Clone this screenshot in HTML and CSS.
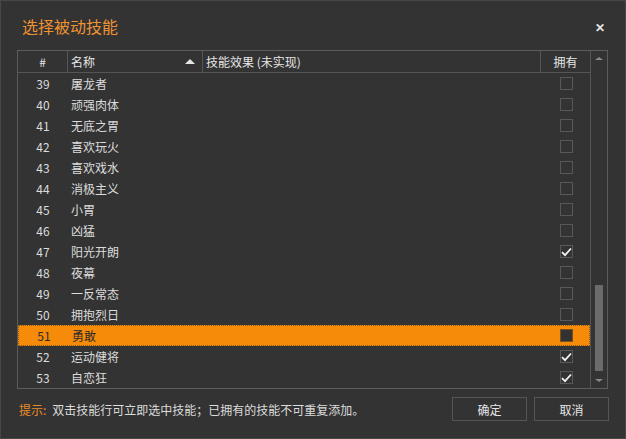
FILE: index.html
```html
<!DOCTYPE html>
<html>
<head>
<meta charset="utf-8">
<link rel="stylesheet" href="styles.css">
</head>
<body>
<div class="dialog">
  <div class="titlebar">
    <div class="title">选择被动技能</div>
    <div class="close">✕</div>
  </div>
  <div class="table">
    <div class="grid">
      <div class="hrow">
        <div class="hc c-num">#</div>
        <div class="hc c-name"><span>名称</span><span class="sort"></span></div>
        <div class="hc c-eff">技能效果 (未实现)</div>
        <div class="hc c-own">拥有</div>
      </div>
      <div class="rows" id="rows"></div>
    </div>
    <div class="scroll">
      <div class="arrow up"></div>
      <div class="track"><div class="thumb"></div></div>
      <div class="arrow down"></div>
    </div>
  </div>
  <div class="footer">
    <div class="hint"><span class="hint-label">提示:</span><span class="hint-text">双击技能行可立即选中技能；已拥有的技能不可重复添加。</span></div>
    <div class="buttons">
      <div class="btn">确定</div>
      <div class="btn">取消</div>
    </div>
  </div>
</div>
<script src="app.js"></script>
</body>
</html>
```
FILE: app.js
```js
const data = [
  [39,"屠龙者",0],[40,"顽强肉体",0],[41,"无底之胃",0],[42,"喜欢玩火",0],
  [43,"喜欢戏水",0],[44,"消极主义",0],[45,"小胃",0],[46,"凶猛",0],
  [47,"阳光开朗",1],[48,"夜幕",0],[49,"一反常态",0],[50,"拥抱烈日",0],
  [51,"勇敢",0,1],[52,"运动健将",1],[53,"自恋狂",1]
];
const rows = document.getElementById('rows');
const check = '<svg width="11" height="10" viewBox="0 0 11 10"><path d="M1 5.2 L4 8.2 L10 1.5" fill="none" stroke="#f2f2f2" stroke-width="1.8"/></svg>';
data.forEach(d => {
  const r = document.createElement('div');
  r.className = 'row' + (d[3] ? ' sel' : '');
  r.innerHTML = '<div class="c-num">' + d[0] + '</div><div class="c-name">' + d[1] +
    '</div><div class="c-eff"></div><div class="c-own"><span class="cb">' + (d[2] ? check : '') + '</span></div>';
  rows.appendChild(r);
});
```
FILE: styles.css
```css
html, body { margin: 0; padding: 0; background: #333333; }
body { font-family: "Noto Sans CJK SC", "Noto Sans", sans-serif; color: #dcdcdc; }
.dialog {
  width: 626px; height: 439px; box-sizing: border-box;
  border: 1px solid #474747; background: #333333;
  display: flex; flex-direction: column;
}
.titlebar {
  height: 49px; display: flex; align-items: center; justify-content: space-between;
  padding: 0 20px 0 21px; box-sizing: border-box;
}
.title { color: #ef9232; font-size: 16px; margin-top: 1px; }
.close { color: #e6e6e6; font-size: 12px; font-weight: bold; margin-top: 1px; }
.table {
  margin-left: 16px; width: 591px; height: 339px; box-sizing: border-box;
  border: 1px solid #5c5c5c; display: flex;
}
.grid { flex: 1; display: flex; flex-direction: column; }
.hrow {
  height: 22px; box-sizing: border-box; border-bottom: 1px solid #555555;
  display: flex; font-size: 12px; color: #e6e6e6;
}
.hc { display: flex; align-items: center; border-right: 1px solid #555555; box-sizing: border-box; }
.hc.c-own { border-right: none; }
.c-num { width: 50px; justify-content: center; text-align: center; flex: none; }
.c-name { width: 135px; flex: none; padding-left: 3px; box-sizing: border-box; }
.hc.c-name { justify-content: space-between; padding-right: 7px; }
.c-eff { width: 338px; flex: none; padding-left: 3px; box-sizing: border-box; }
.c-own { flex: 1; display: flex; justify-content: center; align-items: center; }
.sort { width: 0; height: 0; border-left: 5px solid transparent; border-right: 5px solid transparent; border-bottom: 5px solid #e6e6e6; }
.rows { flex: 1; }
.row { height: 21px; display: flex; align-items: center; font-size: 12px; color: #dcdcdc; box-sizing: border-box; }
.row .c-num { display: flex; }
.row .c-own { padding-left: 1px; }
.cb {
  width: 13px; height: 13px; box-sizing: border-box; border: 1px solid #585858;
  display: flex; align-items: center; justify-content: center;
}
.row.sel { background: #f68b0a; color: #2a2a2a; border: 1px dotted #8a5a1a; }
.row.sel .cb { background: #323232; border-color: #7a5020; }
.scroll { width: 16px; border-left: 1px solid #555555; display: flex; flex-direction: column; align-items: center; }
.arrow { width: 0; height: 0; border-left: 4px solid transparent; border-right: 4px solid transparent; margin: 6px 0; }
.arrow.up { border-bottom: 3px solid #8a8a8a; }
.arrow.down { border-top: 3px solid #8a8a8a; }
.track { flex: 1; width: 100%; display: flex; flex-direction: column; justify-content: flex-end; align-items: center; padding-bottom: 2px; box-sizing: border-box; }
.thumb { width: 8px; height: 86px; background: #6b6b6b; }
.footer { display: flex; justify-content: space-between; align-items: center; padding: 8px 16px 0 18px; }
.hint { font-size: 12px; }
.hint-label { color: #e98c2c; margin-right: 6px; }
.hint-text { color: #dcdcdc; }
.buttons { display: flex; gap: 7px; }
.btn {
  width: 75px; height: 24px; box-sizing: border-box; border: 1px solid #555555;
  display: flex; align-items: center; justify-content: center; font-size: 12px; color: #e6e6e6;
}
```
